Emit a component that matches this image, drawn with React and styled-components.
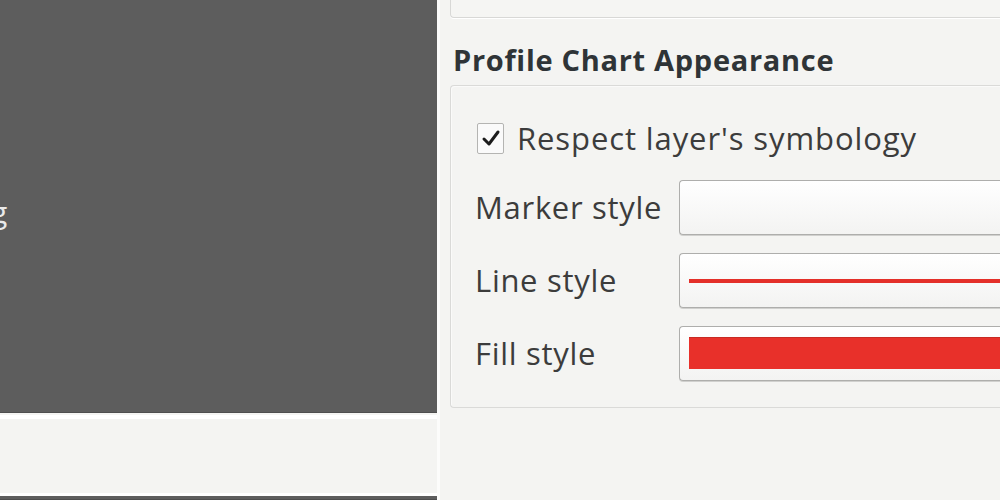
import React from 'react';
import styled, { createGlobalStyle } from 'styled-components';

const GlobalStyle = createGlobalStyle`
  html, body {
    margin: 0;
    padding: 0;
    background: #f4f4f2;
  }
  * { box-sizing: border-box; }
`;

const Window = styled.div`
  width: 1000px;
  height: 500px;
  overflow: hidden;
  display: flex;
  background: #f4f4f2;
  font-family: "Open Sans", "DejaVu Sans", sans-serif;
  color: #3c3c3c;
`;

// --- colonne de gauche (vues de la carte) ---
const LeftColumn = styled.div`
  width: 440px;
  flex-shrink: 0;
  display: flex;
  flex-direction: column;
  border-right: 3px solid #fcfcfb;
  margin-right: 1px;
`;

const Canvas = styled.div`
  background: #5d5d5d;
  height: ${({ $h }) => $h}px;
  flex-shrink: 0;
  box-shadow: inset 0 -1px 0 #4e4e4e;
  padding-top: ${({ $pad }) => $pad || 0}px;
  overflow: hidden;
`;

const CutLabel = styled.div`
  color: #eaeaea;
  font-size: 30px;
  margin-left: -9px;
  line-height: 1;
`;

const Strip = styled.div`
  flex: 1;
  border-top: 4px solid #ffffff;
  border-bottom: 3px solid #ffffff;
  background: #f4f4f2;
  margin-top: 2px;
`;

// --- colonne de droite (panneau des propriétés) ---
const RightColumn = styled.div`
  flex: 1;
  padding-left: 9px;
  display: flex;
  flex-direction: column;
`;

const TopFrame = styled.div`
  height: 19px;
  margin-top: -1px;
  border: 1px solid #d8d8d6;
  border-right: none;
  border-radius: 0 0 0 4px;
  background: #f5f5f3;
  box-shadow: 0 1px 0 #ffffff;
`;

const Heading = styled.h2`
  margin: 23px 0 0 3px;
  font-size: 29px;
  font-weight: 700;
  color: #2f3437;
  line-height: 38px;
  letter-spacing: 0.7px;
`;

const GroupBox = styled.div`
  margin-top: 6px;
  height: 323px;
  border: 1px solid #dadad8;
  border-right: none;
  border-radius: 4px 0 0 4px;
  box-shadow: inset 1px 1px 0 #fafaf9;
  padding: 35px 0 0 26px;
  display: flex;
  flex-direction: column;
`;

const CheckRow = styled.label`
  display: flex;
  align-items: center;
  gap: 13px;
  height: 34px;
  font-size: 31px;
  letter-spacing: 0.9px;
`;

const CheckBox = styled.span`
  width: 27px;
  height: 31px;
  flex-shrink: 0;
  border: 1px solid #b4b4b2;
  border-radius: 2px;
  background: #fafafa;
  display: flex;
  align-items: center;
  justify-content: center;
`;

const FieldGrid = styled.div`
  margin-top: 25px;
  margin-left: -2px;
  display: grid;
  grid-template-columns: 204px 1fr;
  row-gap: 18px;
  align-items: center;
`;

const FieldLabel = styled.span`
  font-size: 31px;
  letter-spacing: 0.7px;
  line-height: 1;
`;

const SymbolButton = styled.div`
  height: 55px;
  border: 1px solid #aeaeac;
  border-right: none;
  border-radius: 4px 0 0 4px;
  background: linear-gradient(#ffffff, #f3f3f2);
  box-shadow: 0 1px 0 #d0d0ce;
  padding-left: 9px;
  display: flex;
  align-items: center;
`;

const LineSample = styled.div`
  width: 100%;
  height: 4px;
  background: #e4302a;
`;

const FillSample = styled.div`
  width: 100%;
  height: 32px;
  background: #e8302a;
  border-top: 1px solid #c72a24;
  margin-top: -1px;
`;

const CheckMark = () => (
  <svg width="20" height="18" viewBox="0 0 20 18">
    <path d="M3 10 L8 15 L17 3" fill="none" stroke="#1c1c1c" strokeWidth="3" strokeLinecap="round" strokeLinejoin="round" />
  </svg>
);

export default function App() {
  return (
    <>
      <GlobalStyle />
      <Window>
        <LeftColumn>
          <Canvas $h={413} $pad={197}>
            <CutLabel>g</CutLabel>
          </Canvas>
          <Strip />
          <Canvas $h={4} />
        </LeftColumn>

        <RightColumn>
          <TopFrame />
          <Heading>Profile Chart Appearance</Heading>
          <GroupBox>
            <CheckRow>
              <CheckBox><CheckMark /></CheckBox>
              Respect layer's symbology
            </CheckRow>
            <FieldGrid>
              <FieldLabel>Marker style</FieldLabel>
              <SymbolButton />
              <FieldLabel>Line style</FieldLabel>
              <SymbolButton><LineSample /></SymbolButton>
              <FieldLabel>Fill style</FieldLabel>
              <SymbolButton><FillSample /></SymbolButton>
            </FieldGrid>
          </GroupBox>
        </RightColumn>
      </Window>
    </>
  );
}
